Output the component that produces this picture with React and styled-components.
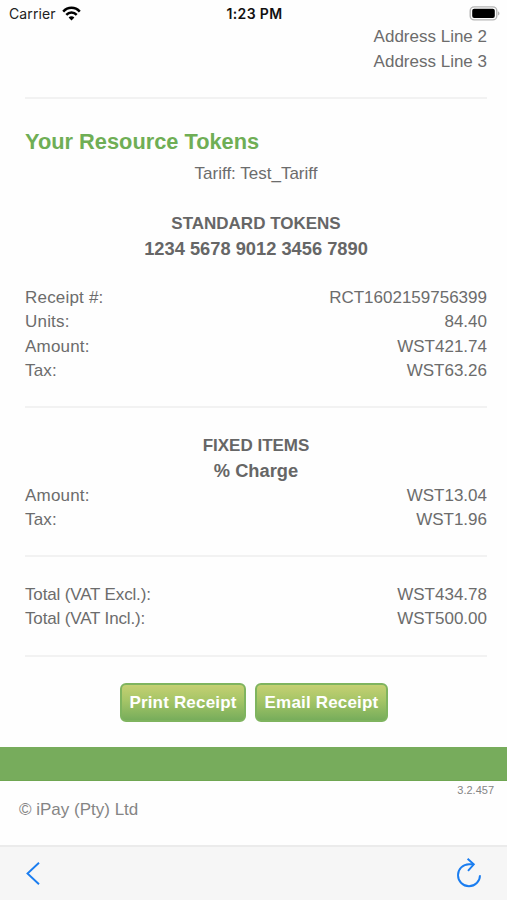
import React from 'react';
import styled, { createGlobalStyle } from 'styled-components';

const GlobalStyle = createGlobalStyle`
  * {
    box-sizing: border-box;
  }

  body {
    margin: 0;
    background-color: #fefefe;
    font-family: "Liberation Sans", Arial, sans-serif;
    color: #6c6c6c;
  }
`;

const Screen = styled.div`
  display: flex;
  flex-direction: column;
  width: 100%;
  height: 900px;
  overflow: hidden;
`;

// Status bar
const StatusBar = styled.header`
  display: grid;
  grid-template-columns: 1fr auto 1fr;
  align-items: center;
  height: 25px;
  padding: 3px 7px 0 9px;
  font-family: Inter, "Liberation Sans", sans-serif;
  font-size: 14px;
  color: #222;
`;

const Carrier = styled.div`
  display: flex;
  align-items: center;
  gap: 6px;
  margin-top: -2px;
  letter-spacing: 0.1px;
`;

const Clock = styled.div`
  margin-top: -1px;
  font-size: 14px;
  font-weight: 600;
  letter-spacing: 0.35px;
  color: #111;
`;

const BatteryWrap = styled.div`
  display: flex;
  justify-content: flex-end;
  margin-top: -2px;
`;

// Receipt
const Receipt = styled.main`
  padding: 0 20px 0 25px;
  font-size: 17px;
  line-height: 24.5px;
`;

const Address = styled.div`
  text-align: right;
`;

const Divider = styled.hr`
  height: 2px;
  margin: ${(props) => props.$margin};
  border: 0;
  background-color: #f2f2f2;
`;

const Title = styled.h2`
  margin: 0 0 4px;
  font-size: 21.8px;
  line-height: 32px;
  font-weight: bold;
  color: #6fae55;
`;

const Tariff = styled.div`
  margin-bottom: 24px;
  text-align: center;
`;

const Heading = styled.div`
  font-weight: bold;
  font-size: ${(props) => (props.$large ? '18.3px' : '17px')};
  line-height: 25px;
  text-align: center;
  color: #666;
`;

const Rows = styled.div`
  margin-top: ${(props) => props.$top || 0};
`;

const Row = styled.div`
  display: flex;
  justify-content: space-between;
`;

const Label = styled.span`
  letter-spacing: ${(props) => props.$tracking};
`;

const Buttons = styled.div`
  display: flex;
  justify-content: center;
  gap: 9px;
  padding-right: 4px;
`;

const Button = styled.button`
  width: ${(props) => props.$width};
  height: 39px;
  padding: 1px 0 0;
  border: 2px solid #7fb45f;
  border-radius: 6px;
  background: linear-gradient(#c5d072, #a5c567 45%, #77ad5b);
  font-family: inherit;
  font-size: 17px;
  font-weight: bold;
  letter-spacing: 0.18px;
  white-space: nowrap;
  color: #fff;
`;

// Footer
const Band = styled.div`
  height: 34px;
  margin-top: 25px;
  border-bottom: 1px solid #6fa652;
  background-color: #77ac5c;
`;

const Footer = styled.footer`
  flex: 1;
  padding: 2px 13px 0 19px;
  font-size: 17px;
  line-height: 24px;
  color: #858585;
`;

const Version = styled.div`
  margin-bottom: 1px;
  font-size: 11px;
  line-height: 14px;
  text-align: right;
`;

const Toolbar = styled.nav`
  display: flex;
  justify-content: space-between;
  align-items: center;
  height: 55px;
  padding: 0 25px 2px;
  border-top: 2px solid #ebebeb;
  background-color: #f6f6f6;
`;

const WifiIcon = () => (
  <svg width="19" height="15" viewBox="0 0 19 15" fill="none" stroke="#000" strokeWidth="2.5">
    <path d="M1.2 5.6C5.8 0.6 13.2 0.6 17.8 5.6" />
    <path d="M4.3 8.8C7.2 5.8 11.8 5.8 14.7 8.8" />
    <path d="M9.5 14.4L6.6 11.4C8.2 9.9 10.8 9.9 12.4 11.4Z" fill="#000" stroke="none" />
  </svg>
);

const BatteryIcon = () => (
  <svg width="31" height="15" viewBox="0 0 31 15">
    <rect x="1.2" y="0.9" width="26.6" height="13" rx="4" fill="#fff" stroke="#b5b5b5" strokeWidth="1.4" />
    <rect x="3.2" y="2.8" width="22.6" height="9.3" rx="2" fill="#000" />
    <path d="M29.1 5.2C30.9 6 30.9 8.8 29.1 9.6Z" fill="#aaa" />
  </svg>
);

const BackIcon = () => (
  <svg width="16" height="24" viewBox="0 0 16 24" fill="none" stroke="#1a7df0" strokeWidth="1.9">
    <path d="M14 1.7L2.5 12.5L14 23.3" />
  </svg>
);

const ReloadIcon = () => (
  <svg width="26" height="30" viewBox="0 0 26 30" fill="none" stroke="#1a7df0" strokeWidth="1.9">
    <path d="M24 17.2A11 11 0 1 1 13 6.2H17.6" />
    <path d="M11.6 0.8L17.8 6.4L12 12.8" />
  </svg>
);

const tokenRows = [
  ['Receipt #:', 'RCT1602159756399'],
  ['Units:', '84.40'],
  ['Amount:', 'WST421.74'],
  ['Tax:', 'WST63.26'],
];

const fixedRows = [
  ['Amount:', 'WST13.04'],
  ['Tax:', 'WST1.96'],
];

const totalRows = [
  ['Total (VAT Excl.):', 'WST434.78'],
  ['Total (VAT Incl.):', 'WST500.00'],
];

const RowList = ({ items, top, tracking = '0.2px' }) => (
  <Rows $top={top}>
    {items.map(([label, value]) => (
      <Row key={label}>
        <Label $tracking={tracking}>{label}</Label>
        <span>{value}</span>
      </Row>
    ))}
  </Rows>
);

const App = () => {
  return (
    <Screen>
      <GlobalStyle />
      <StatusBar>
        <Carrier>
          Carrier
          <WifiIcon />
        </Carrier>
        <Clock>1:23 PM</Clock>
        <BatteryWrap>
          <BatteryIcon />
        </BatteryWrap>
      </StatusBar>
      <Receipt>
        <Address>
          <div>Address Line 2</div>
          <div>Address Line 3</div>
        </Address>
        <Divider $margin="23px 0 27px" />
        <Title>Your Resource Tokens</Title>
        <Tariff>Tariff: Test_Tariff</Tariff>
        <Heading>STANDARD TOKENS</Heading>
        <Heading $large>1234 5678 9012 3456 7890</Heading>
        <RowList items={tokenRows} top="25px" />
        <Divider $margin="22px 0 25px" />
        <Heading>FIXED ITEMS</Heading>
        <Heading $large>% Charge</Heading>
        <RowList items={fixedRows} top="1px" />
        <Divider $margin="22px 0 26px" />
        <RowList items={totalRows} tracking="-0.15px" />
        <Divider $margin="23px 0 26px" />
        <Buttons>
          <Button $width="126px">Print Receipt</Button>
          <Button $width="133px">Email Receipt</Button>
        </Buttons>
      </Receipt>
      <Band />
      <Footer>
        <Version>3.2.457</Version>
        <div>© iPay (Pty) Ltd</div>
      </Footer>
      <Toolbar>
        <BackIcon />
        <ReloadIcon />
      </Toolbar>
    </Screen>
  );
};

export default App;
